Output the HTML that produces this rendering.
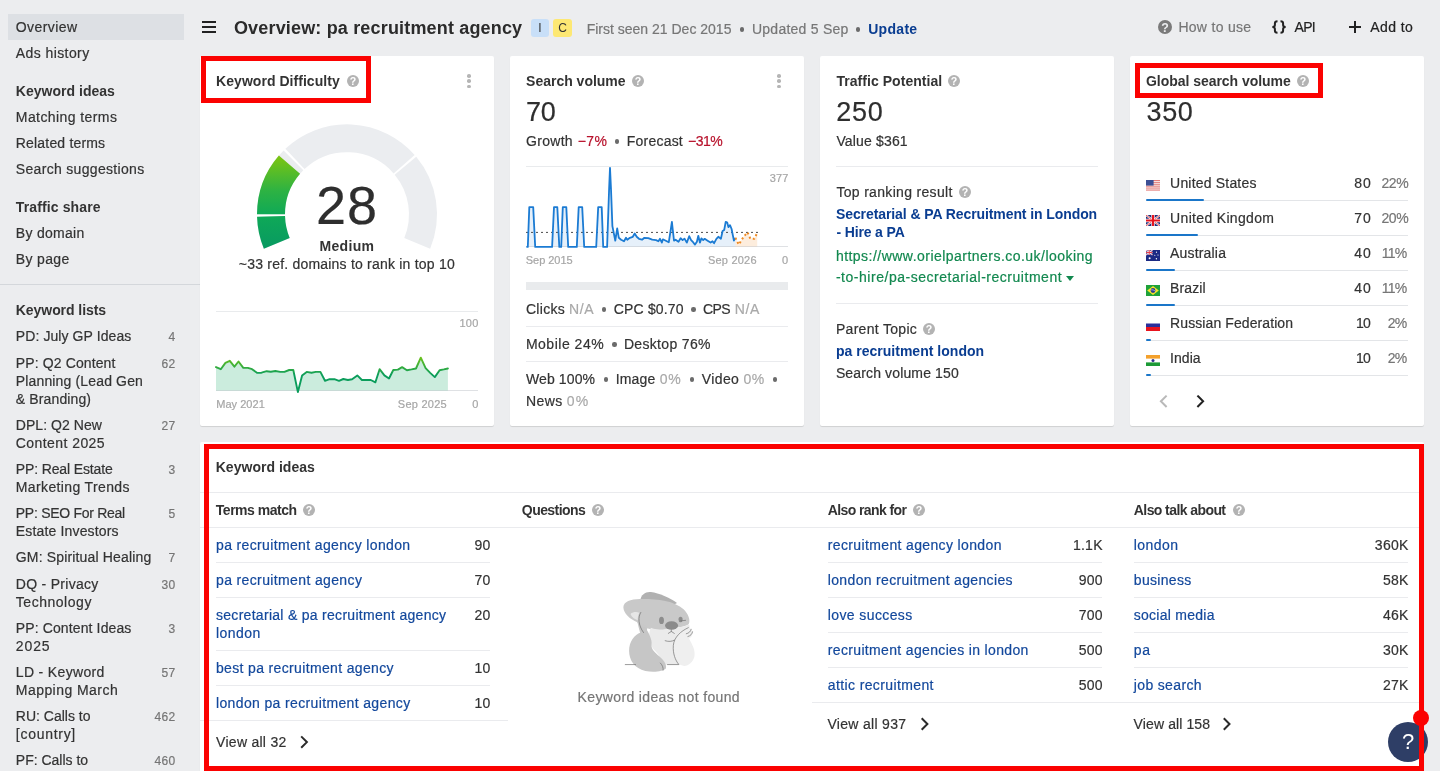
<!DOCTYPE html><html lang="en"><head><meta charset="utf-8"><title>Overview: pa recruitment agency</title><style>
*{box-sizing:border-box;margin:0;padding:0}
html,body{width:1440px;height:771px;overflow:hidden}
body{background:#ecedef;font-family:"Liberation Sans",sans-serif;font-size:14px;line-height:18px;color:#333;position:relative}
#root{position:absolute;left:0;top:0;width:1440px;height:771px;will-change:transform;opacity:.999}
.a{position:absolute;white-space:nowrap}
.t{position:absolute;white-space:nowrap;line-height:18px;letter-spacing:.25px;-webkit-text-stroke:.2px currentColor}
.b{font-weight:700;letter-spacing:0;-webkit-text-stroke:0}
.g{color:#767676}
.lg{color:#a9a9a9}
.r{color:#b8122c}
.cnt{position:absolute;white-space:nowrap;font-size:12px;line-height:18px;color:#777;text-align:right;letter-spacing:.3px}
.card{position:absolute;background:#fff;border-radius:2px;box-shadow:0 1px 1px rgba(0,0,0,.13)}
.hl{position:absolute;height:1px;background:#eaebee}
.red{position:absolute;border:5px solid #fb0200}
.lnk{color:#13489c}
.bl{color:#0a3d91}
.dot{position:absolute;width:4.4px;height:4.4px;border-radius:50%;background:#6b6b6b}
.ax{position:absolute;white-space:nowrap;font-size:11px;line-height:14px;color:#a6a6a6;letter-spacing:.2px}
</style></head><body><div id="root">
<div class="a" style="left:8px;top:14px;width:176px;height:26px;background:#dde0e4"></div>
<div class="t " style="top:18px;letter-spacing:0.41px;left:15.798px;">Overview</div>
<div class="t " style="top:44px;letter-spacing:0.41px;left:15.798px;">Ads history</div>
<div class="t b" style="top:82px;letter-spacing:0.02px;left:15.798px;">Keyword ideas</div>
<div class="t " style="top:108px;letter-spacing:0.42px;left:15.798px;">Matching terms</div>
<div class="t " style="top:134px;letter-spacing:0.18px;left:15.798px;">Related terms</div>
<div class="t " style="top:160px;letter-spacing:0.32px;left:15.798px;">Search suggestions</div>
<div class="t b" style="top:198px;letter-spacing:0.12px;left:15.798px;">Traffic share</div>
<div class="t " style="top:224px;letter-spacing:0.29px;left:15.798px;">By domain</div>
<div class="t " style="top:250px;letter-spacing:0.34px;left:15.798px;">By page</div>
<div class="t b" style="top:301px;letter-spacing:-0.06px;left:15.798px;">Keyword lists</div>
<div class="a" style="left:0;top:284px;width:200px;height:1px;background:#d4d7db"></div>
<div class="t " style="top:327px;letter-spacing:0.09px;left:15.798px;">PD: July GP Ideas</div>
<div class="t g" style="top:328px;font-size:12px;right:1264.55px;letter-spacing:.3px;">4</div>
<div class="t " style="top:354px;letter-spacing:0.12px;left:15.798px;">PP: Q2 Content</div>
<div class="t g" style="top:355px;font-size:12px;right:1264.55px;letter-spacing:.3px;">62</div>
<div class="t " style="top:372px;letter-spacing:0.15px;left:15.798px;">Planning (Lead Gen</div>
<div class="t " style="top:390px;letter-spacing:0.13px;left:15.798px;">&amp; Branding)</div>
<div class="t " style="top:416px;letter-spacing:0.05px;left:15.798px;">DPL: Q2 New</div>
<div class="t g" style="top:417px;font-size:12px;right:1264.55px;letter-spacing:.3px;">27</div>
<div class="t " style="top:434px;letter-spacing:0.43px;left:15.798px;">Content 2025</div>
<div class="t " style="top:460px;letter-spacing:-0.13px;left:15.798px;">PP: Real Estate</div>
<div class="t g" style="top:461px;font-size:12px;right:1264.55px;letter-spacing:.3px;">3</div>
<div class="t " style="top:478px;letter-spacing:0.37px;left:15.798px;">Marketing Trends</div>
<div class="t " style="top:504px;letter-spacing:-0.28px;left:15.798px;">PP: SEO For Real</div>
<div class="t g" style="top:505px;font-size:12px;right:1264.55px;letter-spacing:.3px;">5</div>
<div class="t " style="top:522px;letter-spacing:0.16px;left:15.798px;">Estate Investors</div>
<div class="t " style="top:548px;letter-spacing:0.16px;left:15.798px;">GM: Spiritual Healing</div>
<div class="t g" style="top:549px;font-size:12px;right:1264.55px;letter-spacing:.3px;">7</div>
<div class="t " style="top:575px;letter-spacing:0.29px;left:15.798px;">DQ - Privacy</div>
<div class="t g" style="top:576px;font-size:12px;right:1264.55px;letter-spacing:.3px;">30</div>
<div class="t " style="top:593px;letter-spacing:0.53px;left:15.798px;">Technology</div>
<div class="t " style="top:619px;letter-spacing:0.12px;left:15.798px;">PP: Content Ideas</div>
<div class="t g" style="top:620px;font-size:12px;right:1264.55px;letter-spacing:.3px;">3</div>
<div class="t " style="top:637px;letter-spacing:0.89px;left:15.798px;">2025</div>
<div class="t " style="top:663px;letter-spacing:0.34px;left:15.798px;">LD - Keyword</div>
<div class="t g" style="top:664px;font-size:12px;right:1264.55px;letter-spacing:.3px;">57</div>
<div class="t " style="top:681px;letter-spacing:0.45px;left:15.798px;">Mapping March</div>
<div class="t " style="top:707px;letter-spacing:0px;left:15.798px;">RU: Calls to</div>
<div class="t g" style="top:708px;font-size:12px;right:1264.55px;letter-spacing:.3px;">462</div>
<div class="t " style="top:725px;letter-spacing:0.72px;left:15.798px;">[country]</div>
<div class="t " style="top:751px;letter-spacing:0px;left:15.798px;">PF: Calls to</div>
<div class="t g" style="top:752px;font-size:12px;right:1264.55px;letter-spacing:.3px;">460</div>
<div class="a" style="left:202px;top:21px;width:14px;height:2px;background:#222"></div>
<div class="a" style="left:202px;top:26px;width:14px;height:2px;background:#222"></div>
<div class="a" style="left:202px;top:31px;width:14px;height:2px;background:#222"></div>
<div class="t b" style="top:16px;font-size:18px;line-height:24px;letter-spacing:0.17px;left:233.926px;color:#2b2b2b;">Overview: pa recruitment agency</div>
<div class="a" style="left:531px;top:19px;width:18px;height:18px;background:#c8dff8;border-radius:3px;font-size:12px;line-height:18px;text-align:center;color:#333">I</div>
<div class="a" style="left:553px;top:19px;width:19px;height:18px;background:#fde873;border-radius:3px;font-size:12px;line-height:18px;text-align:center;color:#333">C</div>
<div class="t g" style="top:20px;letter-spacing:0px;left:586.698px;">First seen 21 Dec 2015</div>
<div class="dot" style="left:739.8px;top:27.3px;width:4.4px;height:4.4px;background:#6b6b6b"></div>
<div class="t g" style="top:20px;letter-spacing:0.24px;left:751.998px;">Updated 5 Sep</div>
<div class="dot" style="left:856.1px;top:27.3px;width:4.4px;height:4.4px;background:#6b6b6b"></div>
<div class="t b bl" style="top:20px;letter-spacing:0.3px;left:868.198px;">Update</div>
<svg class="a" style="left:1158px;top:20px" width="14" height="14" viewBox="0 0 12 12"><circle cx="6" cy="6" r="6" fill="#7a7a7a"/><text x="6" y="9.9" font-size="10.6" font-weight="700" fill="#ecedef" text-anchor="middle" font-family="Liberation Sans, sans-serif">?</text></svg>
<div class="t g" style="top:18px;letter-spacing:0.29px;left:1178.4px;">How to use</div>
<svg class="a" style="left:1271px;top:20px" width="16" height="14" viewBox="0 0 16 14"><g fill="none" stroke="#222" stroke-width="2"><path d="M6.5 1.3C4.3 1.3 3.9 2.3 3.9 3.6V4.9C3.9 6.2 3 6.9 1.4 7C3 7.1 3.9 7.8 3.9 9.1V10.4C3.9 11.7 4.3 12.7 6.5 12.7"/><path d="M9.5 1.3C11.700000000000001 1.3 12.1 2.3 12.1 3.6V4.9C12.1 6.2 13 6.9 14.6 7C13 7.1 12.1 7.8 12.1 9.1V10.4C12.1 11.7 11.700000000000001 12.7 9.5 12.7"/></g></svg>
<div class="t " style="top:18px;letter-spacing:-0.7px;left:1294.6px;color:#222;">API</div>
<div class="a" style="left:1349px;top:26px;width:12px;height:2px;background:#222"></div><div class="a" style="left:1354px;top:21px;width:2px;height:12px;background:#222"></div>
<div class="t " style="top:18px;letter-spacing:0.41px;left:1370.2px;color:#222;">Add to</div>
<div class="card" style="left:200px;top:56px;width:294px;height:370px"></div>
<div class="card" style="left:510px;top:56px;width:294px;height:370px"></div>
<div class="card" style="left:820px;top:56px;width:294px;height:370px"></div>
<div class="card" style="left:1130px;top:56px;width:294px;height:370px"></div>
<div class="card" style="left:200px;top:442px;width:1224px;height:340px"></div>
<div class="t b" style="top:72px;letter-spacing:0.04px;left:216.098px;">Keyword Difficulty</div>
<svg class="a" style="left:347px;top:75px" width="12" height="12" viewBox="0 0 12 12"><circle cx="6" cy="6" r="6" fill="#b3b3b3"/><text x="6" y="9.9" font-size="10.6" font-weight="700" fill="#fff" text-anchor="middle" font-family="Liberation Sans, sans-serif">?</text></svg>
<div class="dot" style="left:467px;top:74.2px;width:3.6px;height:3.6px;background:#b5b5b5"></div>
<div class="dot" style="left:467px;top:79.2px;width:3.6px;height:3.6px;background:#b5b5b5"></div>
<div class="dot" style="left:467px;top:84.7px;width:3.6px;height:3.6px;background:#b5b5b5"></div>
<svg class="a" style="left:0;top:0" width="1440" height="771" viewBox="0 0 1440 771"><defs><linearGradient id="kdg" gradientUnits="userSpaceOnUse" x1="0" y1="248" x2="0" y2="156"><stop offset="0" stop-color="#089a61"/><stop offset=".36" stop-color="#0fa957"/><stop offset=".62" stop-color="#2db243"/><stop offset="1" stop-color="#7cc511"/></linearGradient></defs><g fill="none" stroke-width="28"><path d="M276.79 243.38A76 76 0 0 1 271.03 216.42" stroke="#ebedf0"/><path d="M271.00 214.30A76 76 0 0 1 293.45 160.37" stroke="#ebedf0"/><path d="M294.97 158.90A76 76 0 0 1 404.10 164.14" stroke="#ebedf0"/><path d="M405.47 165.75A76 76 0 0 1 417.21 243.38" stroke="#ebedf0"/><path d="M276.79 243.38A76 76 0 0 1 271.03 216.42" stroke="url(#kdg)"/><path d="M271.00 214.30A76 76 0 0 1 289.47 164.64" stroke="url(#kdg)"/></g></svg>
<div class="t " style="top:175.2px;font-size:54px;line-height:60px;letter-spacing:1.06px;left:315.978px;color:#2e2e2e;">28</div>
<div class="t b" style="top:236.5px;letter-spacing:0.35px;left:319.398px;">Medium</div>
<div class="t " style="top:255px;letter-spacing:0.21px;left:238.798px;">~33 ref. domains to rank in top 10</div>
<svg class="a" style="left:0;top:0" width="1440" height="771" viewBox="0 0 1440 771"><defs><linearGradient id="kdl" gradientUnits="userSpaceOnUse" x1="0" y1="357" x2="0" y2="375"><stop offset="0" stop-color="#6cc21a"/><stop offset="1" stop-color="#0b9d5b"/></linearGradient></defs><rect x="216" y="311" width="262" height="1" fill="#e9ebed"/><rect x="216" y="390" width="262" height="1" fill="#dfe1e4"/><path d="M216.0 390.5 L216.0 367.1 L220.8 369.2 L225.4 362.9 L229.8 360.8 L234.4 366.7 L238.5 361.5 L243.3 367.9 L247.9 367.9 L252.1 369.2 L257.3 372.9 L261.5 372.7 L266.7 371.2 L270.8 371.7 L275.4 371.0 L280.2 371.9 L284.4 371.9 L289.2 370.0 L293.3 370.0 L297.9 390.5 L302.1 375.4 L306.7 371.9 L311.5 372.7 L315.8 371.9 L320.4 371.9 L325.0 380.8 L329.6 379.2 L334.4 379.2 L339.0 380.8 L343.3 379.0 L347.9 380.0 L352.1 379.2 L357.3 375.4 L361.9 380.0 L366.7 380.0 L370.8 380.0 L375.4 382.3 L379.6 369.2 L384.4 375.4 L389.0 378.5 L393.3 370.0 L397.9 369.6 L402.1 367.1 L406.9 370.2 L411.5 369.4 L416.0 368.5 L420.8 357.7 L425.6 368.1 L430.2 372.9 L434.8 377.1 L439.6 370.2 L443.8 369.4 L447.9 368.5 L447.9 390.5Z" fill="#10a765" fill-opacity=".22"/><polyline points="216.0,367.1 220.8,369.2 225.4,362.9 229.8,360.8 234.4,366.7 238.5,361.5 243.3,367.9 247.9,367.9 252.1,369.2 257.3,372.9 261.5,372.7 266.7,371.2 270.8,371.7 275.4,371.0 280.2,371.9 284.4,371.9 289.2,370.0 293.3,370.0 297.9,392.1 302.1,375.4 306.7,371.9 311.5,372.7 315.8,371.9 320.4,371.9 325.0,380.8 329.6,379.2 334.4,379.2 339.0,380.8 343.3,379.0 347.9,380.0 352.1,379.2 357.3,375.4 361.9,380.0 366.7,380.0 370.8,380.0 375.4,382.3 379.6,369.2 384.4,375.4 389.0,378.5 393.3,370.0 397.9,369.6 402.1,367.1 406.9,370.2 411.5,369.4 416.0,368.5 420.8,357.7 425.6,368.1 430.2,372.9 434.8,377.1 439.6,370.2 443.8,369.4 447.9,368.5" fill="none" stroke="url(#kdl)" stroke-width="1.9" stroke-linejoin="round" stroke-linecap="round"/></svg>
<div class="t ax" style="top:316px;font-size:11px;line-height:14px;right:961.55px;">100</div>
<div class="t ax" style="top:397px;font-size:11px;line-height:14px;letter-spacing:0.04px;left:216.227px;">May 2021</div>
<div class="t ax" style="top:397px;font-size:11px;line-height:14px;letter-spacing:0.25px;left:397.827px;">Sep 2025</div>
<div class="t ax" style="top:397px;font-size:11px;line-height:14px;right:961.55px;">0</div>
<div class="t b" style="top:72px;letter-spacing:-0.01px;left:526.098px;">Search volume</div>
<svg class="a" style="left:632px;top:75px" width="12" height="12" viewBox="0 0 12 12"><circle cx="6" cy="6" r="6" fill="#b3b3b3"/><text x="6" y="9.9" font-size="10.6" font-weight="700" fill="#fff" text-anchor="middle" font-family="Liberation Sans, sans-serif">?</text></svg>
<div class="dot" style="left:777px;top:74.2px;width:3.6px;height:3.6px;background:#b5b5b5"></div>
<div class="dot" style="left:777px;top:79.2px;width:3.6px;height:3.6px;background:#b5b5b5"></div>
<div class="dot" style="left:777px;top:84.7px;width:3.6px;height:3.6px;background:#b5b5b5"></div>
<div class="t " style="top:96px;font-size:27px;line-height:32px;letter-spacing:-0.23px;left:525.939px;color:#2e2e2e;">70</div>
<div class="t " style="top:132px;letter-spacing:0.28px;left:526.098px;">Growth</div>
<div class="t r" style="top:132px;letter-spacing:0.31px;left:577.798px;">−7%</div>
<div class="dot" style="left:615.1px;top:139.3px;width:4.4px;height:4.4px;background:#6b6b6b"></div>
<div class="t " style="top:132px;letter-spacing:0.21px;left:626.798px;">Forecast</div>
<div class="t r" style="top:132px;letter-spacing:-0.52px;left:687.998px;">−31%</div>
<svg class="a" style="left:0;top:0" width="1440" height="771" viewBox="0 0 1440 771"><rect x="526" y="166" width="262" height="1" fill="#e9ebed"/><rect x="526" y="246" width="262" height="1" fill="#dfe1e4"/><path d="M526.4 246.6 L526.4 246.9 L527.8 246.9 L529.3 207.1 L533.2 207.1 L535.2 246.9 L552.1 246.9 L554.0 207.1 L557.3 207.1 L559.3 246.9 L561.2 246.9 L562.8 207.1 L566.3 207.1 L568.2 246.9 L576.8 246.9 L578.7 207.1 L582.2 207.1 L584.2 246.9 L596.2 246.9 L598.2 207.1 L601.7 207.1 L603.2 246.9 L607.1 246.9 L609.1 189.2 L610.0 167.8 L611.0 189.2 L612.4 226.1 L615.3 240.7 L617.2 228.4 L618.8 237.8 L621.1 239.7 L624.0 241.3 L626.0 237.8 L627.3 239.7 L629.9 237.8 L632.8 236.8 L634.7 233.5 L636.7 236.8 L639.0 238.8 L642.1 239.7 L644.4 237.8 L648.3 238.2 L652.2 239.7 L656.1 240.1 L658.4 241.3 L660.0 238.8 L661.9 242.6 L662.9 239.3 L665.8 240.7 L668.8 242.2 L670.7 230.0 L671.9 221.8 L672.8 230.0 L674.0 240.7 L675.6 239.7 L678.5 241.7 L680.6 238.2 L682.6 240.1 L684.5 238.6 L686.8 242.6 L689.2 236.2 L691.1 240.1 L693.1 242.2 L695.0 244.6 L696.9 241.7 L698.3 235.8 L699.9 242.6 L701.4 238.4 L703.2 240.1 L704.7 238.8 L707.6 240.7 L710.6 242.6 L712.5 241.3 L714.1 243.2 L716.4 238.8 L718.3 236.8 L720.9 238.8 L722.6 231.0 L724.2 230.0 L725.7 221.8 L727.3 222.6 L728.4 227.1 L730.0 225.1 L731.6 229.0 L733.9 240.7 L735.4 237.8 L735.4 246.6Z" fill="#1a7ad4" fill-opacity=".11"/><path d="M735.4 246.6 L735.4 237.8 L738.8 244.6 L743.6 236.8 L747.5 232.3 L750.4 238.8 L754.3 238.8 L757.2 232.9 L757.2 246.6Z" fill="#f5922d" fill-opacity=".16"/><line x1="526" y1="232.4" x2="758" y2="232.4" stroke="#4a4a4a" stroke-width="1" stroke-dasharray="2 3"/><polyline points="526.4,246.9 527.8,246.9 529.3,207.1 533.2,207.1 535.2,246.9 552.1,246.9 554.0,207.1 557.3,207.1 559.3,246.9 561.2,246.9 562.8,207.1 566.3,207.1 568.2,246.9 576.8,246.9 578.7,207.1 582.2,207.1 584.2,246.9 596.2,246.9 598.2,207.1 601.7,207.1 603.2,246.9 607.1,246.9 609.1,189.2 610.0,167.8 611.0,189.2 612.4,226.1 615.3,240.7 617.2,228.4 618.8,237.8 621.1,239.7 624.0,241.3 626.0,237.8 627.3,239.7 629.9,237.8 632.8,236.8 634.7,233.5 636.7,236.8 639.0,238.8 642.1,239.7 644.4,237.8 648.3,238.2 652.2,239.7 656.1,240.1 658.4,241.3 660.0,238.8 661.9,242.6 662.9,239.3 665.8,240.7 668.8,242.2 670.7,230.0 671.9,221.8 672.8,230.0 674.0,240.7 675.6,239.7 678.5,241.7 680.6,238.2 682.6,240.1 684.5,238.6 686.8,242.6 689.2,236.2 691.1,240.1 693.1,242.2 695.0,244.6 696.9,241.7 698.3,235.8 699.9,242.6 701.4,238.4 703.2,240.1 704.7,238.8 707.6,240.7 710.6,242.6 712.5,241.3 714.1,243.2 716.4,238.8 718.3,236.8 720.9,238.8 722.6,231.0 724.2,230.0 725.7,221.8 727.3,222.6 728.4,227.1 730.0,225.1 731.6,229.0 733.9,240.7 735.4,237.8" fill="none" stroke="#1b7bd3" stroke-width="1.8" stroke-linejoin="round"/><polyline points="735.4,237.8 738.8,244.6 743.6,236.8 747.5,232.3 750.4,238.8 754.3,238.8 757.2,232.9" fill="none" stroke="#ef8a22" stroke-width="2" stroke-dasharray="2 2.6" stroke-linejoin="round"/></svg>
<div class="t ax" style="top:171px;font-size:11px;line-height:14px;right:651.35px;">377</div>
<div class="t ax" style="top:253px;font-size:11px;line-height:14px;letter-spacing:-0.05px;left:525.827px;">Sep 2015</div>
<div class="t ax" style="top:253px;font-size:11px;line-height:14px;letter-spacing:0.22px;left:707.927px;">Sep 2026</div>
<div class="t ax" style="top:253px;font-size:11px;line-height:14px;right:651.75px;">0</div>
<div class="a" style="left:526px;top:282px;width:262px;height:8px;background:#e9ebed"></div>
<div class="t " style="top:300px;letter-spacing:0.32px;left:525.898px;">Clicks</div>
<div class="t lg" style="top:300px;letter-spacing:0.6px;left:568.998px;">N/A</div>
<div class="dot" style="left:601.8px;top:307.3px;width:4.4px;height:4.4px;background:#6b6b6b"></div>
<div class="t " style="top:300px;letter-spacing:0.16px;left:613.798px;">CPC $0.70</div>
<div class="dot" style="left:691.2px;top:307.3px;width:4.4px;height:4.4px;background:#6b6b6b"></div>
<div class="t " style="top:300px;letter-spacing:-0.63px;left:703.098px;">CPS</div>
<div class="t lg" style="top:300px;letter-spacing:0.55px;left:734.798px;">N/A</div>
<div class="hl" style="left:526px;top:326px;width:262px"></div>
<div class="t " style="top:335px;letter-spacing:0.51px;left:525.898px;">Mobile 24%</div>
<div class="dot" style="left:612.2px;top:342.3px;width:4.4px;height:4.4px;background:#6b6b6b"></div>
<div class="t " style="top:335px;letter-spacing:0.33px;left:623.898px;">Desktop 76%</div>
<div class="hl" style="left:526px;top:361px;width:262px"></div>
<div class="t " style="top:370px;letter-spacing:0.13px;left:525.898px;">Web 100%</div>
<div class="dot" style="left:603.6px;top:377.3px;width:4.4px;height:4.4px;background:#6b6b6b"></div>
<div class="t " style="top:370px;letter-spacing:0.15px;left:615.698px;">Image</div>
<div class="t lg" style="top:370px;letter-spacing:0.71px;left:659.798px;">0%</div>
<div class="dot" style="left:689.7px;top:377.3px;width:4.4px;height:4.4px;background:#6b6b6b"></div>
<div class="t " style="top:370px;letter-spacing:0.37px;left:701.798px;">Video</div>
<div class="t lg" style="top:370px;letter-spacing:0.61px;left:743.398px;">0%</div>
<div class="dot" style="left:773px;top:377.3px;width:4.4px;height:4.4px;background:#6b6b6b"></div>
<div class="t " style="top:392px;letter-spacing:0.44px;left:525.898px;">News</div>
<div class="t lg" style="top:392px;letter-spacing:1.1px;left:566.798px;">0%</div>
<div class="t b" style="top:72px;letter-spacing:0.05px;left:836.398px;">Traffic Potential</div>
<svg class="a" style="left:948px;top:75px" width="12" height="12" viewBox="0 0 12 12"><circle cx="6" cy="6" r="6" fill="#b3b3b3"/><text x="6" y="9.9" font-size="10.6" font-weight="700" fill="#fff" text-anchor="middle" font-family="Liberation Sans, sans-serif">?</text></svg>
<div class="t " style="top:96px;font-size:27px;line-height:32px;letter-spacing:0.73px;left:836.339px;color:#2e2e2e;">250</div>
<div class="t " style="top:132px;letter-spacing:0.16px;left:836.398px;">Value $361</div>
<div class="hl" style="left:836px;top:166px;width:262px"></div>
<div class="t " style="top:183px;letter-spacing:0.32px;left:836.398px;">Top ranking result</div>
<svg class="a" style="left:959px;top:186px" width="12" height="12" viewBox="0 0 12 12"><circle cx="6" cy="6" r="6" fill="#b3b3b3"/><text x="6" y="9.9" font-size="10.6" font-weight="700" fill="#fff" text-anchor="middle" font-family="Liberation Sans, sans-serif">?</text></svg>
<div class="t b bl" style="top:205px;letter-spacing:-0.09px;left:835.998px;">Secretarial &amp; PA Recruitment in London</div>
<div class="t b bl" style="top:223px;letter-spacing:-0.14px;left:836.398px;">- Hire a PA</div>
<div class="t " style="top:247px;letter-spacing:0.47px;left:835.898px;color:#12884f;">https://www.orielpartners.co.uk/looking</div>
<div class="t " style="top:268px;letter-spacing:0.53px;left:835.898px;color:#12884f;">-to-hire/pa-secretarial-recruitment</div>
<svg class="a" style="left:1066px;top:276px" width="8" height="5" viewBox="0 0 8 5"><path d="M0 0h8L4 5z" fill="#12884f"/></svg>
<div class="hl" style="left:836px;top:303px;width:262px"></div>
<div class="t " style="top:320px;letter-spacing:0.31px;left:835.898px;">Parent Topic</div>
<svg class="a" style="left:923px;top:323px" width="12" height="12" viewBox="0 0 12 12"><circle cx="6" cy="6" r="6" fill="#b3b3b3"/><text x="6" y="9.9" font-size="10.6" font-weight="700" fill="#fff" text-anchor="middle" font-family="Liberation Sans, sans-serif">?</text></svg>
<div class="t b bl" style="top:342px;letter-spacing:0.02px;left:835.898px;">pa recruitment london</div>
<div class="t " style="top:364px;letter-spacing:0.14px;left:835.898px;">Search volume 150</div>
<div class="t b" style="top:72px;letter-spacing:-0.04px;left:1146px;">Global search volume</div>
<svg class="a" style="left:1297px;top:75px" width="12" height="12" viewBox="0 0 12 12"><circle cx="6" cy="6" r="6" fill="#b3b3b3"/><text x="6" y="9.9" font-size="10.6" font-weight="700" fill="#fff" text-anchor="middle" font-family="Liberation Sans, sans-serif">?</text></svg>
<div class="t " style="top:96px;font-size:27px;line-height:32px;letter-spacing:0.68px;left:1146.44px;color:#2e2e2e;">350</div>
<div class="t " style="top:174px;letter-spacing:0.19px;left:1170.1px;">United States</div>
<div class="t " style="top:174px;letter-spacing:1.1px;right:68.1px;">80</div>
<div class="t g" style="top:174px;letter-spacing:-0.35px;right:31.65px;">22%</div>
<div class="a" style="left:1146px;top:200px;width:262px;height:1px;background:#e3e5e8"></div>
<div class="a" style="left:1146px;top:199px;width:58px;height:2px;background:#1a76c9;border-radius:1px"></div>
<svg class="a" style="left:1146px;top:180px" width="14" height="11" viewBox="0 0 14 11"><rect width="14" height="11" fill="#fcefee"/><rect y="0" width="14" height=".9" fill="#e0706c"/><rect y="1.9" width="14" height=".9" fill="#e0706c"/><rect y="3.8" width="14" height=".9" fill="#e0706c"/><rect y="5.7" width="14" height=".9" fill="#e0706c"/><rect y="7.6" width="14" height=".9" fill="#e0706c"/><rect y="9.6" width="14" height=".9" fill="#e0706c"/><rect width="7.6" height="5.6" fill="#3c4f94"/></svg>
<div class="t " style="top:209px;letter-spacing:0.33px;left:1170.1px;">United Kingdom</div>
<div class="t " style="top:209px;letter-spacing:0.96px;right:68.24px;">70</div>
<div class="t g" style="top:209px;letter-spacing:-0.35px;right:31.65px;">20%</div>
<div class="a" style="left:1146px;top:235px;width:262px;height:1px;background:#e3e5e8"></div>
<div class="a" style="left:1146px;top:234px;width:52px;height:2px;background:#1a76c9;border-radius:1px"></div>
<svg class="a" style="left:1146px;top:215px" width="14" height="11" viewBox="0 0 14 11"><rect width="14" height="11" fill="#1f2f7a"/><path d="M0 0L14 11M14 0L0 11" stroke="#fff" stroke-width="1.9"/><path d="M0 0L14 11M14 0L0 11" stroke="#e0242b" stroke-width=".8"/><path d="M7 0V11M0 5.5H14" stroke="#fff" stroke-width="3.4"/><path d="M7 0V11M0 5.5H14" stroke="#e8141e" stroke-width="2.2"/></svg>
<div class="t " style="top:244px;letter-spacing:0.17px;left:1170.1px;">Australia</div>
<div class="t " style="top:244px;letter-spacing:1.1px;right:68.1px;">40</div>
<div class="t g" style="top:244px;letter-spacing:-0.7px;right:33.4px;">11%</div>
<div class="a" style="left:1146px;top:270px;width:262px;height:1px;background:#e3e5e8"></div>
<div class="a" style="left:1146px;top:269px;width:29px;height:2px;background:#1a76c9;border-radius:1px"></div>
<svg class="a" style="left:1146px;top:250px" width="14" height="11" viewBox="0 0 14 11"><rect width="14" height="11" fill="#1b2a84"/><path d="M0 0L6.5 5M6.5 0L0 5" stroke="#f3c6cf" stroke-width="1.3"/><path d="M3.25 0V5M0 2.5H6.5" stroke="#fff" stroke-width="1.7"/><path d="M3.25 0V5M0 2.5H6.5" stroke="#e0303c" stroke-width=".9"/><circle cx="3.6" cy="8.2" r="1" fill="#fff"/><circle cx="10.5" cy="2.2" r=".6" fill="#fff"/><circle cx="12" cy="5" r=".6" fill="#fff"/><circle cx="10.4" cy="8.8" r=".7" fill="#fff"/><circle cx="8.8" cy="5.2" r=".55" fill="#fff"/></svg>
<div class="t " style="top:279px;letter-spacing:0.12px;left:1170.1px;">Brazil</div>
<div class="t " style="top:279px;letter-spacing:1.1px;right:68.1px;">40</div>
<div class="t g" style="top:279px;letter-spacing:-0.7px;right:33.4px;">11%</div>
<div class="a" style="left:1146px;top:305px;width:262px;height:1px;background:#e3e5e8"></div>
<div class="a" style="left:1146px;top:304px;width:29px;height:2px;background:#1a76c9;border-radius:1px"></div>
<svg class="a" style="left:1146px;top:285px" width="14" height="11" viewBox="0 0 14 11"><rect width="14" height="11" fill="#1fa23a"/><path d="M7 1.1L12.8 5.5L7 9.9L1.2 5.5z" fill="#f8e32b"/><circle cx="7" cy="5.5" r="2.4" fill="#2a3f8f"/><path d="M4.8 4.9Q7 4.2 9.3 6" stroke="#dfe6f5" stroke-width=".6" fill="none"/></svg>
<div class="t " style="top:314px;letter-spacing:0.09px;left:1170.1px;">Russian Federation</div>
<div class="t " style="top:314px;letter-spacing:-0.7px;right:69.9px;">10</div>
<div class="t g" style="top:314px;letter-spacing:-0.7px;right:33.4px;">2%</div>
<div class="a" style="left:1146px;top:340px;width:262px;height:1px;background:#e3e5e8"></div>
<div class="a" style="left:1146px;top:339px;width:5px;height:2px;background:#1a76c9;border-radius:1px"></div>
<svg class="a" style="left:1146px;top:320px" width="14" height="11" viewBox="0 0 14 11"><rect width="14" height="11" fill="#fff"/><rect y="3.5" width="14" height="3.6" fill="#2a2f9b"/><rect y="7" width="14" height="4" fill="#e8141e"/></svg>
<div class="t " style="top:349px;letter-spacing:0.05px;left:1170.1px;">India</div>
<div class="t " style="top:349px;letter-spacing:-0.7px;right:69.9px;">10</div>
<div class="t g" style="top:349px;letter-spacing:-0.7px;right:33.4px;">2%</div>
<div class="a" style="left:1146px;top:375px;width:262px;height:1px;background:#e3e5e8"></div>
<div class="a" style="left:1146px;top:374px;width:5px;height:2px;background:#1a76c9;border-radius:1px"></div>
<svg class="a" style="left:1146px;top:355px" width="14" height="11" viewBox="0 0 14 11"><rect width="14" height="11" fill="#fff"/><rect width="14" height="3.6" fill="#f4a12c"/><rect y="7.4" width="14" height="3.6" fill="#1c9a36"/><circle cx="7" cy="5.5" r="1.5" fill="#2b2f8c"/></svg>
<svg class="a" style="left:0;top:0" width="1440" height="771"><polyline points="1165.9,396.3 1160.9,401.3 1165.9,406.3" fill="none" stroke="#b9b9b9" stroke-width="2" stroke-linejoin="miter" stroke-linecap="square"/></svg>
<svg class="a" style="left:0;top:0" width="1440" height="771"><polyline points="1198.1,396.3 1203.1,401.3 1198.1,406.3" fill="none" stroke="#222" stroke-width="2" stroke-linejoin="miter" stroke-linecap="square"/></svg>
<div class="t b" style="top:458px;letter-spacing:0.03px;left:215.698px;">Keyword ideas</div>
<div class="hl" style="left:200px;top:492px;width:1224px"></div>
<div class="t b" style="top:501px;letter-spacing:-0.48px;left:215.798px;">Terms match</div>
<svg class="a" style="left:303px;top:504px" width="12" height="12" viewBox="0 0 12 12"><circle cx="6" cy="6" r="6" fill="#b3b3b3"/><text x="6" y="9.9" font-size="10.6" font-weight="700" fill="#fff" text-anchor="middle" font-family="Liberation Sans, sans-serif">?</text></svg>
<div class="t b" style="top:501px;letter-spacing:-0.55px;left:521.798px;">Questions</div>
<svg class="a" style="left:592px;top:504px" width="12" height="12" viewBox="0 0 12 12"><circle cx="6" cy="6" r="6" fill="#b3b3b3"/><text x="6" y="9.9" font-size="10.6" font-weight="700" fill="#fff" text-anchor="middle" font-family="Liberation Sans, sans-serif">?</text></svg>
<div class="t b" style="top:501px;letter-spacing:-0.6px;left:827.798px;">Also rank for</div>
<svg class="a" style="left:913.3px;top:504px" width="12" height="12" viewBox="0 0 12 12"><circle cx="6" cy="6" r="6" fill="#b3b3b3"/><text x="6" y="9.9" font-size="10.6" font-weight="700" fill="#fff" text-anchor="middle" font-family="Liberation Sans, sans-serif">?</text></svg>
<div class="t b" style="top:501px;letter-spacing:-0.58px;left:1133.8px;">Also talk about</div>
<svg class="a" style="left:1233px;top:504px" width="12" height="12" viewBox="0 0 12 12"><circle cx="6" cy="6" r="6" fill="#b3b3b3"/><text x="6" y="9.9" font-size="10.6" font-weight="700" fill="#fff" text-anchor="middle" font-family="Liberation Sans, sans-serif">?</text></svg>
<div class="hl" style="left:200px;top:527px;width:1224px"></div>
<div class="t lnk" style="top:536px;letter-spacing:0.36px;left:215.998px;">pa recruitment agency london</div>
<div class="t " style="top:536px;right:949.55px;">90</div>
<div class="t lnk" style="top:571px;letter-spacing:0.37px;left:215.998px;">pa recruitment agency</div>
<div class="t " style="top:571px;right:949.55px;">70</div>
<div class="t lnk" style="top:606px;letter-spacing:0.29px;left:215.998px;">secretarial &amp; pa recruitment agency</div>
<div class="t " style="top:606px;right:949.55px;">20</div>
<div class="t lnk" style="top:624px;letter-spacing:0.44px;left:215.998px;">london</div>
<div class="t lnk" style="top:659px;letter-spacing:0.35px;left:215.998px;">best pa recruitment agency</div>
<div class="t " style="top:659px;right:949.55px;">10</div>
<div class="t lnk" style="top:694px;letter-spacing:0.36px;left:215.998px;">london pa recruitment agency</div>
<div class="t " style="top:694px;right:949.55px;">10</div>
<div class="hl" style="left:216px;top:562px;width:274px"></div>
<div class="hl" style="left:216px;top:597px;width:274px"></div>
<div class="hl" style="left:216px;top:650px;width:274px"></div>
<div class="hl" style="left:216px;top:685px;width:274px"></div>
<div class="hl" style="left:200px;top:720px;width:308px"></div>
<div class="t " style="top:733px;letter-spacing:0.27px;left:216.098px;">View all 32</div>
<svg class="a" style="left:0;top:0" width="1440" height="771"><polyline points="301.9,737.1 306.9,742.1 301.9,747.1" fill="none" stroke="#2b2b2b" stroke-width="2" stroke-linejoin="miter" stroke-linecap="square"/></svg>
<div class="t g" style="top:688px;letter-spacing:0.36px;left:577.598px;">Keyword ideas not found</div>
<svg class="a" style="left:610px;top:580px" width="100" height="105" viewBox="0 0 734 771">
<path d="M222 150C228 105 262 84 300 88C360 96 440 130 492 168C470 190 300 200 230 190Z" fill="#b1b1b1"/>
<path d="M98 200C100 160 150 140 220 140C330 138 470 150 540 215C575 250 590 290 580 320C560 345 500 350 470 345C420 370 330 375 262 350C240 345 215 330 200 310C150 290 98 245 98 200Z" fill="#c9c9c9"/>
<path d="M198 300L275 345L265 402L222 392Z" fill="#c8c8c8"/>
<path d="M150 250C165 235 195 232 215 240C205 262 202 280 204 296C180 290 160 272 150 250Z" fill="#e6e6e6"/>
<path d="M300 350C360 372 430 368 470 345C520 350 560 340 580 325C600 360 560 420 520 440C500 520 510 580 520 622L400 622C380 560 320 520 300 480C290 440 280 390 300 350Z" fill="#ebebeb"/>
<path d="M215 335C215 360 225 385 225 385C180 400 140 450 140 520C140 590 180 650 260 668C320 680 390 672 410 650C420 620 390 580 350 550C320 525 300 500 305 470C310 440 290 400 262 350Z" fill="#c6c6c6"/>
<path d="M575 345C540 355 490 395 470 450C455 510 470 580 520 625C560 645 610 610 620 560C628 510 600 470 580 430C600 420 612 395 600 370C595 358 585 350 575 345Z" fill="#efefef"/>
<ellipse cx="378" cy="297" rx="18" ry="27" fill="#8d8d8d"/>
<ellipse cx="518" cy="290" rx="15" ry="20" fill="#8d8d8d"/>
<ellipse cx="452" cy="334" rx="48" ry="32" fill="#8b8b8b"/>
<g fill="none" stroke="#6e6e6e" stroke-width="5" stroke-linecap="round">
<path d="M226 238C205 270 205 330 246 386"/>
<path d="M575 350C520 375 470 420 465 480C460 540 480 590 503 618"/>
<path d="M428 392L450 378L472 392M450 366V378"/>
<path d="M405 446C430 454 455 452 472 442"/>
<path d="M560 395C580 390 592 378 596 362M572 415C592 410 604 396 606 380"/>
<path d="M520 300L555 296"/>
<path d="M370 610C385 625 392 645 390 662"/>
<path d="M112 621H188M422 621H503"/>
</g>
</svg>

<div class="t lnk" style="top:536px;letter-spacing:0.36px;left:827.798px;">recruitment agency london</div>
<div class="t " style="top:536px;right:337.25px;">1.1K</div>
<div class="hl" style="left:828px;top:562px;width:274px"></div>
<div class="t lnk" style="top:571px;letter-spacing:0.34px;left:827.798px;">london recruitment agencies</div>
<div class="t " style="top:571px;right:337.25px;">900</div>
<div class="hl" style="left:828px;top:597px;width:274px"></div>
<div class="t lnk" style="top:606px;letter-spacing:0.39px;left:827.798px;">love success</div>
<div class="t " style="top:606px;right:337.25px;">700</div>
<div class="hl" style="left:828px;top:632px;width:274px"></div>
<div class="t lnk" style="top:641px;letter-spacing:0.34px;left:827.798px;">recruitment agencies in london</div>
<div class="t " style="top:641px;right:337.25px;">500</div>
<div class="hl" style="left:828px;top:667px;width:274px"></div>
<div class="t lnk" style="top:676px;letter-spacing:0.38px;left:827.798px;">attic recruitment</div>
<div class="t " style="top:676px;right:337.25px;">500</div>
<div class="t lnk" style="top:536px;letter-spacing:0.44px;left:1133.8px;">london</div>
<div class="t " style="top:536px;right:31.45px;">360K</div>
<div class="hl" style="left:1134px;top:562px;width:274px"></div>
<div class="t lnk" style="top:571px;letter-spacing:0.32px;left:1133.8px;">business</div>
<div class="t " style="top:571px;right:31.45px;">58K</div>
<div class="hl" style="left:1134px;top:597px;width:274px"></div>
<div class="t lnk" style="top:606px;letter-spacing:0.26px;left:1133.8px;">social media</div>
<div class="t " style="top:606px;right:31.45px;">46K</div>
<div class="hl" style="left:1134px;top:632px;width:274px"></div>
<div class="t lnk" style="top:641px;letter-spacing:0.66px;left:1133.8px;">pa</div>
<div class="t " style="top:641px;right:31.45px;">30K</div>
<div class="hl" style="left:1134px;top:667px;width:274px"></div>
<div class="t lnk" style="top:676px;letter-spacing:0.35px;left:1133.8px;">job search</div>
<div class="t " style="top:676px;right:31.45px;">27K</div>
<div class="hl" style="left:812px;top:702px;width:612px"></div>
<div class="t " style="top:715px;letter-spacing:0.31px;left:827.398px;">View all 937</div>
<svg class="a" style="left:0;top:0" width="1440" height="771"><polyline points="922.4,719 927.4,724 922.4,729" fill="none" stroke="#2b2b2b" stroke-width="2" stroke-linejoin="miter" stroke-linecap="square"/></svg>
<div class="t " style="top:715px;letter-spacing:0.11px;left:1133.6px;">View all 158</div>
<svg class="a" style="left:0;top:0" width="1440" height="771"><polyline points="1224.5,719 1229.5,724 1224.5,729" fill="none" stroke="#2b2b2b" stroke-width="2" stroke-linejoin="miter" stroke-linecap="square"/></svg>
<div class="a" style="left:1388px;top:722px;width:40px;height:40px;border-radius:50%;background:#2e3e66;color:#fff;font-size:22px;line-height:40px;text-align:center">?</div>
<div class="red" style="left:201px;top:56px;width:170px;height:47px"></div>
<div class="red" style="left:1135px;top:63px;width:188px;height:35px"></div>
<div class="red" style="left:204px;top:444px;width:1220px;height:327px"></div>
<div class="a" style="left:1413px;top:710px;width:16px;height:16px;border-radius:50%;background:#fb0200"></div>
</div></body></html>
